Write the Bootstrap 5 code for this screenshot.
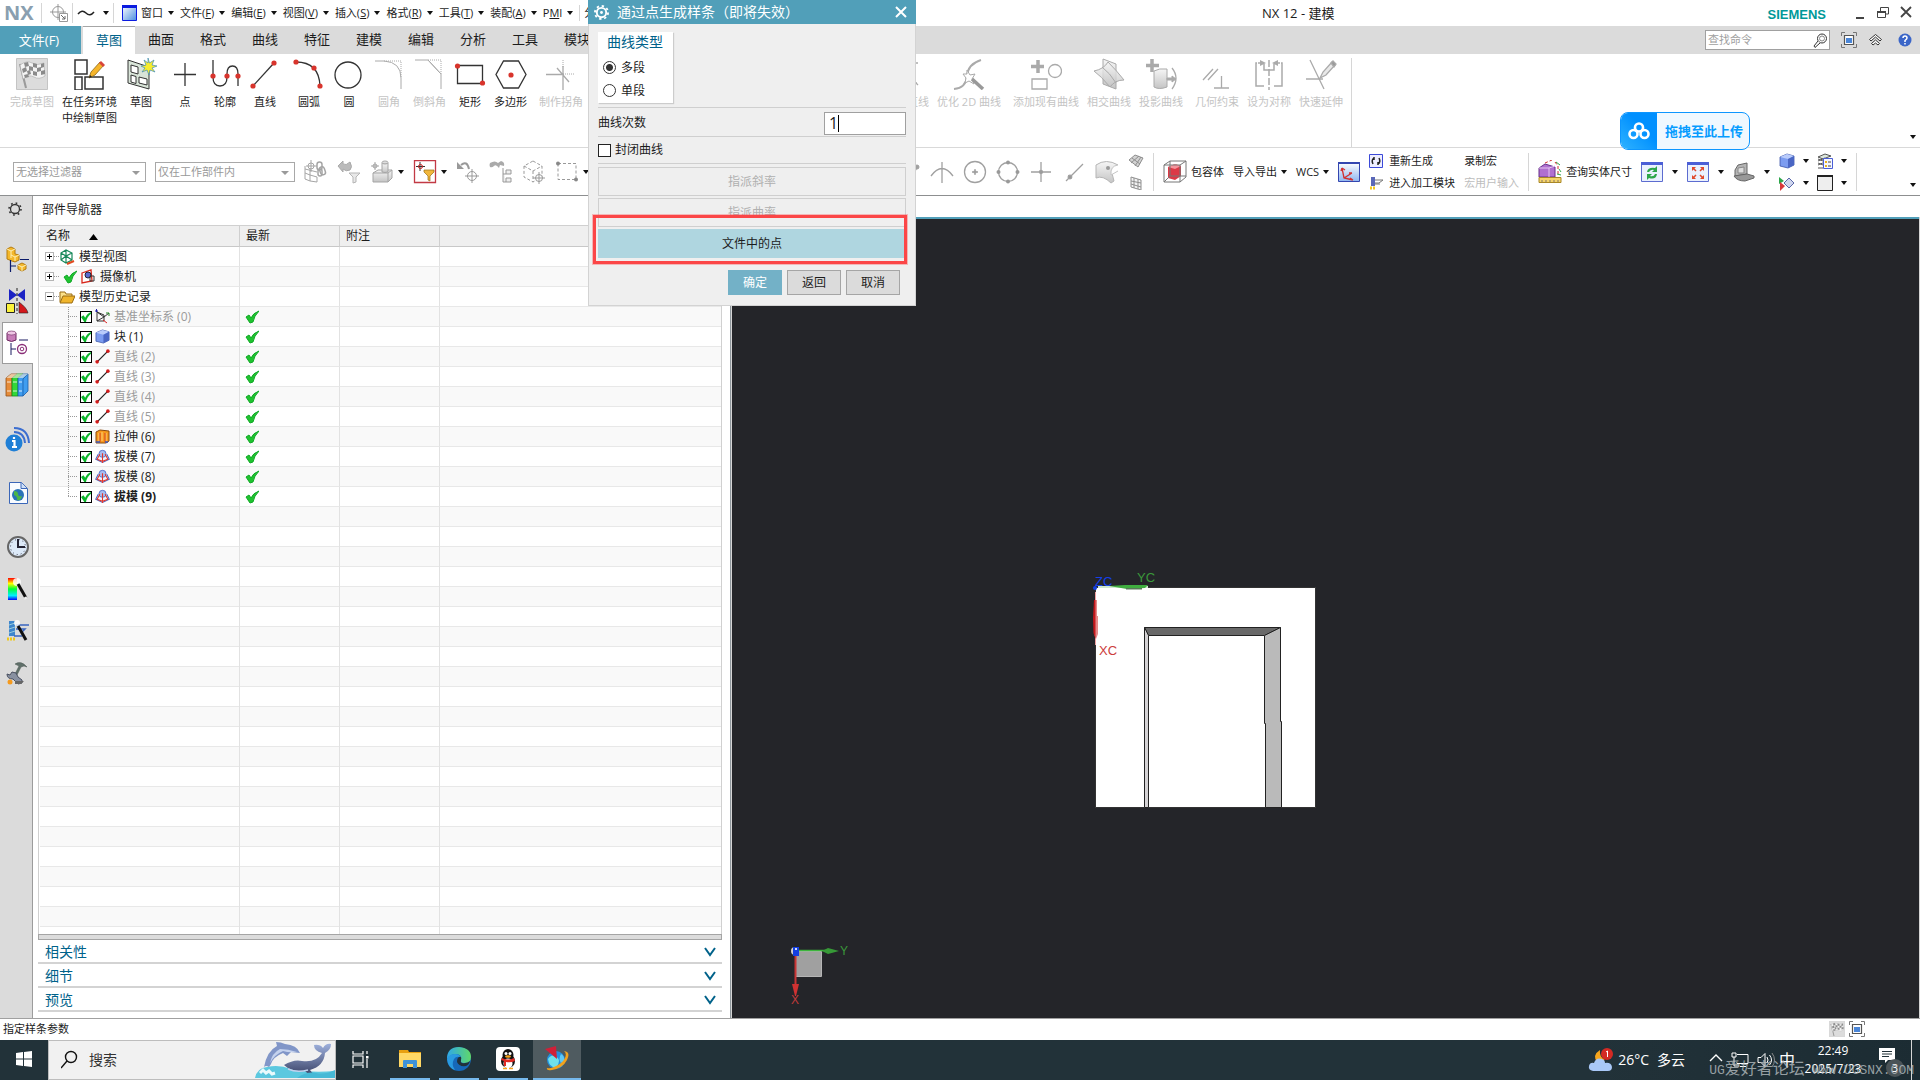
<!DOCTYPE html>
<html lang="zh-CN">
<head>
<meta charset="utf-8">
<meta name="viewport" content="width=device-width, initial-scale=1">
<title>NX 12 - 建模</title>
<link href="https://cdn.jsdelivr.net/npm/bootstrap@5.3.0/dist/css/bootstrap.min.css" rel="stylesheet">
<style>
:root{--nx-blue:#519fb9;--nx-deep:#00628a;--nx-grey:#dbdbdb}
body{font-family:"Open Sans","Noto Sans CJK SC",sans-serif;font-size:12px;line-height:16px;color:#1c1c1c;background:#fff;overflow:hidden}
button,input,select{font-family:inherit;font-size:inherit;line-height:inherit;color:inherit}
button{background:none;border:0;padding:0}
svg{display:block;flex:none}
a{color:inherit;text-decoration:none}
.tri{flex:none;width:0;height:0;border:3px solid transparent;border-top:4px solid #111;border-bottom:0}
.vsep{flex:none;width:1px;background:#d6d6d6}
.dim{color:#bdbdbd}
/* title bar */
.titlebar{height:26px;padding-left:4px}
.logo-nx{font-weight:700;font-size:20px;line-height:24px;color:#8a9fb0;width:37px}
.menu-btn{display:flex;align-items:center;gap:5px;font-size:11px;white-space:nowrap;padding-right:6px}
.win-title{left:1262px;top:4px;font-size:13px;line-height:18px}
.brand{font:700 13px/16px "Liberation Sans",sans-serif;color:#099}
/* tabs */
.tabbar{height:28px;background:var(--nx-grey);font-size:13px}
.tabbar .tab-file{width:81px;background:var(--nx-blue);color:#fff;margin-right:2px;padding-right:3px}
.tabbar .tab-i{width:52px;text-align:center;line-height:27px;white-space:nowrap}
.tabbar .on{background:#fff;border-top:1px solid #a6a6a6;color:var(--nx-deep)}
.find-box{width:125px;height:20px;border:1px solid #a0a0a0;background:#fff;padding-left:2px}
.find-box input{border:0;outline:0;width:97px;padding:0;font-size:11px;background:none}
.find-box input::placeholder{color:#a0a0a0}
/* ribbon */
.ribbon{height:94px;padding:4px 0 0 10px;border-bottom:1px solid #d9d9d9}
.ribbon .half-a{flex:0 0 875px}
.rb{min-width:32px;display:flex;flex-direction:column;align-items:center;font-size:11px;white-space:nowrap;gap:4px;text-align:center}
.rb.dim{color:#c4c4c4}
.tools{height:48px;border-bottom:1px solid #8d8f90;font-size:11px}
.tools .half-a{flex:0 0 897px;padding-left:13px}
.sel-f{height:20px;border:1px solid #a8a8a8;color:#999;background:#fff;appearance:none;padding:0 2px;font-size:11px;line-height:16px}
.sel-wrap{position:relative}
.sel-wrap .tri{position:absolute;right:6px;top:9px;border-width:4px 4px 0;border-top-color:#9a9a9a}
.sel-1{width:133px}.sel-2{width:140px}
.gap-s{gap:6px}.gap-m{gap:9px}.gap-l{gap:11px}
.stack-a{grid-template-columns:auto auto;gap:6px 9px}
.stack-b{grid-template-columns:16px auto 16px auto;gap:6px 8px}
.upload{left:1620px;top:112px;width:130px;height:38px;border:1px solid #0d96ff;border-radius:8px;background:#eff8ff;color:#069cff;font-weight:700;font-size:13px;overflow:hidden}
.upload .pan{width:36px;height:36px;background:linear-gradient(45deg,#2fb2ff,#0090ff 60%)}
/* resource rail */
.body-row{min-height:0}
.rail{width:33px;background:var(--nx-grey);border-right:1px solid #9c9c9c;padding-left:5px}
.rail button{height:42px;display:flex;align-items:center;width:27px}
.rail .r-gear{height:26px;margin-bottom:16px;padding-left:2px}
.rail .r-on{background:#fff;border:1px solid #9c9c9c;border-right:0;width:31px;margin-left:-3px;padding-left:2px;margin-right:-1px}
.rail .r-sp{margin-top:12px}
/* navigator */
.navi{width:698px;padding-left:5px;border-right:1px solid #8f979c}
.navi .inner{width:684px}
.navi h2{font-size:12px;line-height:16px;margin:0;padding:6px 0 7px 4px;font-weight:400;height:29px}
.tree-box{border:1px solid #d0d0d0;border-bottom:0;padding-left:1px}
.tree{table-layout:fixed;border-collapse:separate;border-spacing:0}
.tree th{height:21px;background:#efefef;font-weight:400;border-right:1px solid #cfcfcf;border-bottom:1px solid #c8c8c8;padding:0 0 0 6px}
.tree td{height:20px;border-right:1px solid #e2e2e2;border-bottom:1px solid #e8e8e8;padding:0 0 0 5px;line-height:16px}
.tree th:last-child,.tree td:last-child{border-right:0}
.tree tbody tr:nth-child(even){background:#f9f9f9}
.tree .c1{width:200px}.tree .c2{width:100px}
.cellf{display:flex;align-items:center;height:19px;white-space:nowrap}
.pm{width:9px;height:9px;border:1px solid #b5b5b5;background:#fff linear-gradient(#000,#000) center/5px 1px no-repeat}
.pm.plus{background:linear-gradient(#000,#000) center/5px 1px no-repeat,linear-gradient(#000,#000) center/1px 5px no-repeat,#fff}
.dots{width:5px;border-top:1px dotted #999}
.kid{padding-left:23px}
.branch{width:9px;height:19px;margin-right:3px;background:repeating-linear-gradient(#999 0 1px,transparent 1px 2px) left/1px 100% no-repeat,repeating-linear-gradient(90deg,#999 0 1px,transparent 1px 2px) center/100% 1px no-repeat}
.branch.end{background:repeating-linear-gradient(#999 0 1px,transparent 1px 2px) left top/1px 10px no-repeat,repeating-linear-gradient(90deg,#999 0 1px,transparent 1px 2px) center/100% 1px no-repeat}
.tick{appearance:none;margin:0 3px 0 0;width:12px;height:12px;border:1px solid #000;background:#fff url("data:image/svg+xml,%3Csvg xmlns='http://www.w3.org/2000/svg' viewBox='0 0 12 12'%3E%3Cpath d='M0 6l3-2 2 3q2-5 7-7v2q-5 4-6 10H4z' fill='%230cb52c'/%3E%3C/svg%3E") center/10px 10px no-repeat}
.off{color:#9b9b9b}
.tree-rest{background:linear-gradient(#e2e2e2,#e2e2e2) 199px 0/1px 100% no-repeat,linear-gradient(#e2e2e2,#e2e2e2) 299px 0/1px 100% no-repeat,linear-gradient(#e2e2e2,#e2e2e2) 399px 0/1px 100% no-repeat,repeating-linear-gradient(#f9f9f9 0 19px,#e8e8e8 19px 20px,#fff 20px 39px,#e8e8e8 39px 40px)}
.split{height:6px;background:#dcdcdc;border:1px solid #a5a5a5}
.fold{width:100%;height:24px;display:flex;align-items:center;justify-content:space-between;padding:2px 6px 0 7px;border-bottom:2px solid #d3d3d3;font-size:14px;color:var(--nx-deep)}
.fold:last-child{margin-bottom:6px}
/* graphics window */
.view-wrap{padding-top:21px;padding-right:1px;background:linear-gradient(#fff 0 21px,#d5d5d5 21px)}
.view{background:#242529;border-top:2px solid #519fb9;margin-left:1px}
.model{left:358px;top:351px}
.triad{left:48px;top:721px}
.status{height:22px;border-top:1px solid #a0a0a0;font-size:11px;padding:2px 55px 0 3px}
/* dialog */
.dlg{left:588px;top:0;width:328px;background:#efefef;border:1px solid #d3d3d3;border-top:0;z-index:5;padding-bottom:10px}
.dlg-head{height:24px;margin:0 -1px;background:var(--nx-blue);color:#fff;font-size:14px;padding:0 9px 0 6px}
.dlg-body{padding:8px 9px 0}
.kind{width:75px;height:71px;background:#fff;border:0;box-shadow:1px 1px 1px #ccc;margin:0 0 4px;padding:0 0 0 5px}
.kind legend{font-size:14px;line-height:20px;color:var(--nx-deep);margin:0;padding:0 0 0 4px;height:24px}
.kind label{height:23px;display:flex;align-items:center;gap:5px}
.kind input{appearance:none;width:13px;height:13px;border:1px solid #333;border-radius:50%;background:#fff;margin:0}
.kind input:checked{background:radial-gradient(#333 0 3px,#fff 4px)}
.line-row{border-top:1px solid #cfcfcf;display:flex;align-items:center}
.row-deg{height:29px;padding-top:2px}
.row-chk{height:27px}
.row-btns{padding-top:3px}
.row-act{gap:5px;padding:10px 6px 0 0}
.deg-in{width:82px;height:23px;border:1px solid #a0a0a0;background:#fff;font-size:16px;padding:0 4px;outline:0}
.deg-cur{position:absolute;left:14px;top:3px;width:1px;height:17px;background:#000}
.chk{appearance:none;width:13px;height:13px;border:1px solid #222;background:#fff;margin:0}
.wide-btn{width:100%;height:29px;border:1px solid #cfcfcf;display:block;color:#b0b0b0;margin-bottom:2px}
.wide-btn.hot{background:#afd6e0;border-color:#afd6e0;color:#1c1c1c}
.act{width:54px;height:25px;border:1px solid #a5a5a5;background:#dbdbdb}
.act.go{background:#73b1c7;border-color:#73b1c7;color:#fff}
.mark-box{left:4px;top:215px;width:314px;height:49px;border:3px solid #fb4647;box-shadow:0 0 0 1px #fb464755}
/* taskbar */
.task{height:40px;background:#223239;color:#fff;font-size:14px}
.task-r{background:linear-gradient(90deg,#22323900,#1c2c33)}
.t-search{width:288px;background:#f1f1f1;color:#333;border:1px solid #bdbdbd}
.t-search input{border:0;background:none;outline:0;width:150px;padding:0}
.t-search input::placeholder{color:#333}
.t-app{width:48px;display:flex;align-items:center;justify-content:center;border-bottom:2px solid transparent}
.t-list{gap:1px;margin-left:2px}
.t-run{background:linear-gradient(#76b9ed,#76b9ed) bottom/40px 2px no-repeat;background-origin:border-box}
.t-now{background:#4f5b60;border-bottom-color:#76b9ed}
.clock{font-size:12px;line-height:18px;width:60px;text-align:center}
.wm{right:6px;top:19px;font:13px/16px "Liberation Mono","Noto Sans CJK SC",monospace;color:#b4bcbf;white-space:nowrap;opacity:.8}
.wm b{font:16px/16px "Noto Sans CJK SC",sans-serif}
.n-badge{right:16px;top:19px;width:18px;height:18px;border-radius:50%;background:#4a5357;font-size:11px;text-align:center;line-height:18px}
</style>
</head>
<body class="vh-100 d-flex flex-column">

<svg width="0" height="0" class="position-absolute" aria-hidden="true">
 <defs>
  <linearGradient id="gB" x2="1" y2="1"><stop stop-color="#fff"/><stop offset="1" stop-color="#4a8ee0"/></linearGradient>
  <linearGradient id="gG" x2="0" y2="1"><stop stop-color="#f6f6f6"/><stop offset="1" stop-color="#c4c4c4"/></linearGradient>
  <linearGradient id="gR" x2="0" y2="1"><stop stop-color="#f00"/><stop offset=".25" stop-color="#ff0"/><stop offset=".5" stop-color="#0f3"/><stop offset=".8" stop-color="#0ef"/><stop offset="1" stop-color="#00f"/></linearGradient>
  <linearGradient id="gC" x2="0" y2="1"><stop stop-color="#fff"/><stop offset="1" stop-color="#8fb6f0"/></linearGradient>
  <linearGradient id="gE" x2="1" y2="0"><stop stop-color="#2fa8e8"/><stop offset="1" stop-color="#5fd86a"/></linearGradient>
  <linearGradient id="gW" x2="0" y2="1"><stop stop-color="#9db0dc"/><stop offset="1" stop-color="#3c4468"/></linearGradient>
  <symbol id="ok" viewBox="0 0 14 14"><path d="M1 7l3-2 2 3q2-5 8-7-5 5-6 11l-3 1z" fill="#1fc32f" stroke="#10a826" stroke-width="1"/></symbol>
  <symbol id="line" viewBox="0 0 14 14"><path d="M2 12L12 2" stroke="#222" stroke-width="1.200"/><circle cx="2" cy="12" r="1.700" fill="#d21a1a"/><circle cx="12" cy="2" r="1.700" fill="#d21a1a"/></symbol>
  <symbol id="draft" viewBox="0 0 14 14"><path d="M3 5L.7 9.500 7 12.500l6.300-3L11 5" fill="#eef2fc" stroke="#4a6ac8"/><circle cx="7" cy="4.500" r="3.300" fill="#a9bdf0" stroke="#4a6ac8" stroke-width=".8"/><path d="M7 4v9M4.500 5L2 9.500l5 2 5-2L9.500 5" stroke="#e2372b" fill="none"/></symbol>
  <symbol id="cube" viewBox="0 0 16 16"><path d="M1 4l7-3 7 2v9l-6 3-8-2z" fill="#7c9cf0" stroke="#3c55a8" stroke-width=".8"/><path d="M1 4l8 2 6-3-7-2z" fill="#b9cbfb"/><path d="M9 6v9l6-3V3z" fill="#4a66c4"/></symbol>
  <symbol id="flag" viewBox="0 0 32 32"><path d="M.5.5h31v31H.5z" fill="#dcdcdc" stroke="#c4c4c4"/><path d="M4 6l6 24" stroke="#9a9a9a" stroke-width="2"/><path d="M4 7q7-5 12-2t12 0l1 13q-6 4-11 1t-11 2z" fill="#f3f3f3" stroke="#aaa" stroke-width=".6"/><path d="M8 5l4-1 1 4-4 1zM17 5l4 1v4l-4-1zM25 6l3-1v4l-3 1zM13 8l4 1v4l-4-1zM21 10l4-1v4l-4 1zM6 11l4-2 1 4-4 2zM17 13l4 1v4l-4-1zM11 13l3-1 1 4-3 1zM25 13l4-1v4l-4 1zM8 17l4-1 1 3-4 1z" fill="#8b8b8b"/></symbol>
  <symbol id="chev" viewBox="0 0 12 10"><path d="M1 1l5 7 5-7" fill="none" stroke="#00628a" stroke-width="2"/></symbol>
  <symbol id="fit" viewBox="0 0 16 16"><path d="M.5 4V.5H4M12 .5h3.500V4M15.500 12v3.500H12M4 15.500H.5V12" fill="none" stroke="#777"/><path d="M3.500 3.500h9v9h-9z" fill="#fff" stroke="#555" stroke-width="1.200"/><path d="M5 6h6v5H5z" fill="#4a86d8"/></symbol>
 </defs>
</svg>

<header class="titlebar d-flex align-items-center position-relative">
 <div class="logo-nx">NX</div>
 <div class="vsep h-75"></div>
 <svg width="18" height="18" class="ms-2 me-1" viewBox="0 0 18 18" fill="none" stroke="#999"><circle cx="8" cy="8" r="5.500"/><path d="M8 0v16M0 8h16"/><path d="M9.500 9.500h8v8h-8z" fill="#fff"/><path d="M11 11l4 4m0-3v3h-3" stroke="#666"/></svg>
 <div class="vsep h-75"></div>
 <svg width="18" height="10" class="ms-1" viewBox="0 0 18 10"><path d="M1 6q4-5 8-1t8-1" fill="none" stroke="#222" stroke-width="1.500"/></svg>
 <span class="tri ms-2"></span>
 <div class="vsep h-75 ms-1 me-2"></div>
 <nav class="d-flex align-items-center">
  <svg width="15" height="16" class="me-1" viewBox="0 0 15 16"><path d="M.5.5h14v15H.5z" fill="url(#gB)" stroke="#0b1be0"/><path d="M0 0h15v3H0z" fill="#0b1be0"/></svg>
  <button class="menu-btn">窗口<i class="tri"></i></button>
  <button class="menu-btn"><span>文件(<u>F</u>)</span><i class="tri"></i></button>
  <button class="menu-btn"><span>编辑(<u>E</u>)</span><i class="tri"></i></button>
  <button class="menu-btn"><span>视图(<u>V</u>)</span><i class="tri"></i></button>
  <button class="menu-btn"><span>插入(<u>S</u>)</span><i class="tri"></i></button>
  <button class="menu-btn"><span>格式(<u>R</u>)</span><i class="tri"></i></button>
  <button class="menu-btn"><span>工具(<u>T</u>)</span><i class="tri"></i></button>
  <button class="menu-btn"><span>装配(<u>A</u>)</span><i class="tri"></i></button>
  <button class="menu-btn"><span>P<u>M</u>I</span><i class="tri"></i></button>
  <div class="vsep align-self-stretch me-1"></div>
  <button class="menu-btn">分析</button>
 </nav>
 <h1 class="win-title position-absolute m-0 fw-normal">NX 12 - 建模</h1>
 <div class="ms-auto d-flex align-items-center pe-2">
  <span class="brand pt-1">SIEMENS</span>
  <svg width="62" height="14" class="ms-4" viewBox="-4 0 62 14" fill="none" stroke="#444"><path d="M2 12h8" stroke-width="2" /><path d="M26.500 5V1.500h8V8H32"/><path d="M23.500 5.500h8v6h-8z"/><path d="M23 6h9" stroke-width="2"/><path d="M47 1l10 10M57 1L47 11" stroke-width="1.800"/></svg>
 </div>
</header>

<div class="tabbar d-flex">
 <button class="tab-file">文件(F)</button>
 <a href="#" class="tab-i on">草图</a><a href="#" class="tab-i">曲面</a><a href="#" class="tab-i">格式</a><a href="#" class="tab-i">曲线</a><a href="#" class="tab-i">特征</a><a href="#" class="tab-i">建模</a><a href="#" class="tab-i">编辑</a><a href="#" class="tab-i">分析</a><a href="#" class="tab-i">工具</a><a href="#" class="tab-i">模块</a>
 <div class="ms-auto d-flex align-items-center gap-l pe-2">
  <label class="find-box d-flex align-items-center gap-2"><input type="text" placeholder="查找命令" aria-label="查找命令">
   <svg width="15" height="15" viewBox="0 0 15 15" fill="none" stroke="#333"><circle cx="9" cy="5.500" r="4.500"/><circle cx="9" cy="5.500" r="2.500" stroke="#888"/><path d="M5 8l-4 5 1 1.500 5-4.500" fill="#fff"/></svg></label>
  <svg width="16" height="16"><use href="#fit"/></svg>
  <svg width="15" height="14" viewBox="0 0 15 14" fill="#fff" stroke="#333"><path d="M1.500 6.500l6-5 6 5-1.500 1.500-4.500-4-4.500 4z"/><path d="M3.500 10.500l4-3.500 4 3.500-1.500 1.500-2.500-2-2.500 2z"/></svg>
  <svg width="14" height="14" class="ms-1" viewBox="0 0 14 14"><circle cx="7" cy="7" r="6.500" fill="#3b66c8"/><path d="M5 5q0-2 2-2t2 2q0 1-2 2.500V9M7 10v1.500" fill="none" stroke="#fff" stroke-width="1.500"/></svg>
 </div>
</div>

<section class="ribbon d-flex position-relative">
 <div class="half-a d-flex gap-2 align-items-start overflow-hidden">
  <button class="rb dim"><svg width="32" height="32"><use href="#flag"/></svg>完成草图</button>
  <button class="rb"><svg width="32" height="32" viewBox="0 0 32 32" fill="#fff" stroke="#333" stroke-width="1.500"><path d="M1 2h12v14H1zM1 19h7v13H1zM11 19h18v12H11z"/><path d="M15 20l2-6L26 4l4 3-9 10z" fill="#f6b52a" stroke="#8a6a1a" stroke-width=".8"/><path d="M25 5l2-2 4 4-2 2z" fill="#d8453a" stroke="none"/><path d="M15 20l1-3 2 2z" fill="#222" stroke="none"/></svg>在任务环境<br>中绘制草图</button>
  <button class="rb"><svg width="32" height="32" viewBox="0 0 32 32" fill="#d8e4d8" stroke="#333"><path d="M3 2l21 7v22L3 25z"/><path d="M6 7l7 2v7l-7-2zM6 17l5 1.500v7L6 24zM14 19l8 2v6l-8-2z" fill="#fff"/><path d="M23 0l1.500 5L29 2l-2 5 5 1-5 2 3 4-5-2-1 5-2-5-5 2 3-4-4-2 5-1-2-5 4 3z" fill="#f7ec2e" stroke="#3f8db8" stroke-width=".7"/></svg>草图</button>
  <button class="rb ms-1"><svg width="32" height="32" viewBox="0 0 32 32"><path d="M16 5v23M5 16.500h22" stroke="#333" stroke-width="1.300"/></svg>点</button>
  <button class="rb"><svg width="32" height="32" viewBox="0 0 32 32" fill="none" stroke="#333" stroke-width="1.300"><path d="M4 2v17q0 9 7 9t7-9v-3q0-8 5.500-8t5.500 8v12"/><g fill="#d8342c" stroke="none"><circle cx="4" cy="18" r="2.600"/><circle cx="18" cy="18" r="2.600"/><circle cx="29" cy="18" r="2.600"/></g></svg>轮廓</button>
  <button class="rb"><svg width="32" height="32" viewBox="0 0 32 32"><path d="M4 28L25 5" stroke="#333" stroke-width="1.300"/><circle cx="4" cy="28" r="2.600" fill="#d8342c"/><circle cx="25" cy="5" r="2.600" fill="#d8342c"/></svg>直线</button>
  <button class="rb ms-1"><svg width="32" height="32" viewBox="0 0 32 32"><path d="M3 4q23 0 24 24" fill="none" stroke="#333" stroke-width="1.300"/><g fill="#d8342c"><circle cx="3" cy="4" r="2.600"/><circle cx="21" cy="10" r="2.600"/><circle cx="27" cy="28" r="2.600"/></g></svg>圆弧</button>
  <button class="rb"><svg width="32" height="32" viewBox="0 0 32 32"><circle cx="15" cy="17" r="13" fill="none" stroke="#333" stroke-width="1.300"/></svg>圆</button>
  <button class="rb dim"><svg width="32" height="32" viewBox="0 0 32 32" fill="none" stroke="#aaa"><path d="M2 3h9q17 1 17 17v11"/><path d="M11 3h17v17" stroke-dasharray="1 1"/></svg>圆角</button>
  <button class="rb dim"><svg width="32" height="32" viewBox="0 0 32 32" fill="none" stroke="#aaa"><path d="M1 2h13l13 14v15M14 2l13 14"/><path d="M14 2h13v14" stroke-dasharray="1 1"/></svg>倒斜角</button>
  <button class="rb"><svg width="32" height="32" viewBox="0 0 32 32"><path d="M3.500 7.500h25v18h-25z" fill="none" stroke="#333" stroke-width="1.300"/><circle cx="3.500" cy="8" r="2.600" fill="#d8342c"/><circle cx="28.500" cy="25" r="2.600" fill="#d8342c"/></svg>矩形</button>
  <button class="rb"><svg width="32" height="32" viewBox="0 0 32 32"><path d="M8.500 3h15l7.500 13.500L23.500 30h-15L1 16.500z" fill="none" stroke="#333" stroke-width="1.300"/><circle cx="16" cy="17" r="2.600" fill="#d8342c"/></svg>多边形</button>
  <button class="rb dim ms-1"><svg width="32" height="32" viewBox="0 0 32 32" fill="none" stroke="#aaa"><path d="M1 16.500h18M18 8v24M12 10l12 14" stroke-width="1.300"/><path d="M18 2v8M18 16h12" stroke-dasharray="1 1"/></svg>制作拐角</button>
 </div>
 <div class="d-flex gap-2 align-items-start">
  <button class="rb dim"><svg width="32" height="32" viewBox="0 0 32 32" fill="none" stroke="#aaa" stroke-width="1.300"><path d="M8 5h19M8 15l8 11 10-1M20 20l7 7"/></svg>派生直线</button>
  <button class="rb dim"><svg width="32" height="32" viewBox="0 0 32 32" fill="none" stroke="#aaa"><path d="M1 31q12-1 13-13T28 2" stroke-width="2"/><path d="M14 12l3 5 5-1-3 5 2 5-5-3-4 2 1-5-3-4h4z" fill="#fff"/><path d="M19 21l11 10" stroke-width="3.500" stroke="#999"/></svg>优化 2D 曲线</button>
  <button class="rb dim ms-1"><svg width="32" height="32" viewBox="0 0 32 32" fill="none" stroke="#aaa" stroke-width="1.300"><path d="M8 2v13M1 8.500h13" stroke-width="3.500"/><circle cx="25" cy="13" r="6.500"/><path d="M2 21h15v10H2z"/></svg>添加现有曲线</button>
  <button class="rb dim"><svg width="32" height="32" viewBox="0 0 32 32" fill="url(#gG)" stroke="#aaa"><path d="M10 1l13 5v25l-13-5z"/><path d="M1 13q10-2 14-9 9 9 16 18-9 0-14 7Q8 18 1 13z" fill-opacity=".8"/><path d="M9 9q8 6 14 16" fill="none"/></svg>相交曲线</button>
  <button class="rb dim"><svg width="32" height="32" viewBox="0 0 32 32" fill="url(#gG)" stroke="#aaa"><path d="M7 1v13M1 7.500h13" stroke-width="3.500"/><path d="M9 13q5-3 13-2v18q-8 3-13 0z"/><path d="M22 20h5v-2l4 3-4 3v-2h-5z" fill="#aaa"/><path d="M27 10q8 10 0 21" fill="none" stroke-width="1.300"/></svg>投影曲线</button>
  <button class="rb dim ms-1"><svg width="32" height="32" viewBox="0 0 32 32" fill="none" stroke="#aaa" stroke-width="1.300"><path d="M2 22l10-11M7 22l10-11M13 30h15M20.500 18v12"/></svg>几何约束</button>
  <button class="rb dim"><svg width="32" height="32" viewBox="0 0 32 32" fill="none" stroke="#aaa" stroke-width="1.500"><path d="M4 5h-1v23h8M28 5h1v23h-8" /><path d="M16 2v30" stroke-dasharray="7 2"/><path d="M5 5h2M27 5h-2M11 6v6h10V6"/><path d="M7 2l6 3-6 3zM25 2l-6 3 6 3z" fill="#aaa" stroke="none"/></svg>设为对称</button>
  <button class="rb dim"><svg width="32" height="32" viewBox="0 0 32 32" fill="none" stroke="#aaa" stroke-width="1.300"><path d="M5 2l14 29M1 21h17"/><path d="M15 20l3-6L27 4l3 3-9 10z" fill="#e8e8e8"/><path d="M26 5l2-2 3 3-2 3z" fill="#999"/></svg>快速延伸</button>
  <div class="vsep align-self-stretch"></div>
 </div>
 <i class="tri position-absolute end-0 bottom-0 me-1 mb-2"></i>
</section>

<section class="tools d-flex align-items-center">
 <div class="half-a d-flex align-items-center gap-m">
  <span class="sel-wrap"><select class="sel-f sel-1" aria-label="选择过滤器"><option>无选择过滤器</option></select><i class="tri"></i></span>
  <span class="sel-wrap"><select class="sel-f sel-2" aria-label="选择范围"><option>仅在工作部件内</option></select><i class="tri"></i></span>
  <svg width="24" height="24" viewBox="0 0 24 24" fill="none" stroke="#a5a5a5"><path d="M1 9l12 3M1 6v13l5 2V8M1 13l5 2 7 2M6 21l7 1v-5"/><circle cx="7" cy="6" r="3"/><path d="M7 0v12M2 6h11"/><g fill="none" stroke-width="1.500"><rect x="13" y="2" width="5" height="8" rx="2.500"/><rect x="16" y="7" width="5" height="8" rx="2.500" transform="rotate(-20 18 11)"/><rect x="14" y="9" width="4" height="7" rx="2"/></g></svg>
  <svg width="24" height="24" viewBox="0 0 24 24"><path d="M1 6l5-5v3q3 2 7-2 3 5 0 8-4 2-7-1v3z" fill="#bbb" stroke="#aaa"/><path d="M12 13h11l-4 4v5l-3 1v-6z" fill="#e8e8e8" stroke="#b5b5b5"/></svg>
  <span class="d-flex align-items-center gap-1"><svg width="24" height="24" viewBox="0 0 24 24" fill="url(#gG)" stroke="#a5a5a5"><path d="M3 13l5-3h14v8l-4 4H3z"/><path d="M3 13h15l4-3M18 13v9" fill="none"/><path d="M12 3v9q3 1 6 0V3z"/><ellipse cx="15" cy="2.500" rx="3" ry="1.500"/><circle cx="5" cy="6" r="2" fill="none"/><path d="M5 2v8M1 6h8"/></svg><i class="tri"></i></span>
  <span class="d-flex align-items-center gap-1"><svg width="24" height="24" viewBox="0 0 24 24"><path d="M1.500.5h21v22h-21z" fill="#fff" stroke="#c23a45" stroke-width="1.300"/><path d="M7 2v9M3 6.500h9" stroke="#333"/><circle cx="7.500" cy="6.500" r="2" fill="none" stroke="#c22"/><path d="M11 10h10v2l-4 4v5l-2-1v-4l-4-4z" fill="#f1b73c" stroke="#9a6d14" stroke-width=".7"/></svg><i class="tri"></i></span>
  <svg width="24" height="24" viewBox="0 0 24 24" fill="none" stroke="#999"><path d="M5 5q6-5 8 4" stroke-width="2"/><path d="M1 2v7h7z" fill="#999" stroke="none"/><circle cx="16" cy="16" r="4.500"/><path d="M16 9v14M9 16h14"/></svg>
  <svg width="24" height="24" viewBox="0 0 24 24" fill="#aaa" stroke="#999"><path d="M1 3q5-3 8 0l3-2q4 1 3 5l-4-1-1 3q-3-4-5-2t-4 1q-1-2 0-4z" stroke="none"/><path d="M14 8v14h3M14 14h3M17 10h5v4h-5zM17 18h5v4h-5z" fill="#eee"/></svg>
  <svg width="24" height="24" viewBox="0 0 24 24" fill="none" stroke="#999"><path d="M11 1l9 5v11l-9 5-9-5V6z M2 6l9 5 9-5M11 11v11" stroke-dasharray="3 2"/><circle cx="17" cy="18" r="3.500" fill="#fff"/><path d="M17 12v12M11 18h12"/></svg>
  <span class="d-flex align-items-center gap-1"><svg width="24" height="24" viewBox="0 0 24 24"><path d="M3 3.500h18v16H3z" fill="none" stroke="#999" stroke-dasharray="3 2"/><circle cx="3" cy="3.500" r="2" fill="#888"/><circle cx="21" cy="19.500" r="2" fill="#888"/></svg><i class="tri"></i></span>
 </div>
 <div class="d-flex align-items-center gap-m flex-shrink-0">
  <svg width="24" height="24" viewBox="0 0 24 24" fill="none" stroke="#a0a0a0"><path d="M2 20q12 2 18-13" stroke-width="1.300"/><circle cx="20" cy="7" r="2" fill="#a0a0a0"/></svg>
  <svg width="24" height="24" viewBox="0 0 24 24" fill="none" stroke="#a0a0a0" stroke-width="1.300"><path d="M1 16q11-15 22 0M12 2v21"/></svg>
  <svg width="24" height="24" viewBox="0 0 24 24" fill="none" stroke="#a0a0a0" stroke-width="1.300"><circle cx="12" cy="12" r="10.500"/><path d="M12 9v6M9 12h6"/><circle cx="12" cy="12" r="1"/></svg>
  <svg width="24" height="24" viewBox="0 0 24 24" fill="none" stroke="#a0a0a0" stroke-width="1.300"><circle cx="12" cy="12" r="9.500"/><g fill="#999" stroke="none"><circle cx="12" cy="2.500" r="2"/><circle cx="12" cy="21.500" r="2"/><circle cx="2.500" cy="12" r="2"/><circle cx="21.500" cy="12" r="2"/></g></svg>
  <svg width="24" height="24" viewBox="0 0 24 24" stroke="#a0a0a0" stroke-width="1.300"><path d="M12 2v20M2 12h20"/><circle cx="12" cy="12" r="1.500" fill="#999"/></svg>
  <svg width="24" height="24" viewBox="0 0 24 24" stroke="#a0a0a0" stroke-width="1.300"><path d="M4 21L21 4"/><circle cx="8" cy="17" r="1.800" fill="#999"/></svg>
  <svg width="24" height="24" viewBox="0 0 24 24"><path d="M1 5q10-7 22 0-9 2-4 16l-3 2Q8 15 1 18z" fill="url(#gG)" stroke="#b5b5b5"/><path d="M23 5q-8 1-7 10l7-4" fill="#fff" stroke="#c5c5c5"/><circle cx="13" cy="8" r="2" fill="#999"/></svg>
  <div class="d-flex flex-column gap-2">
   <svg width="16" height="14" viewBox="0 0 16 14" fill="#d2d2d2" stroke="#8f8f8f"><path d="M1 6l6-5 8 3-5 9zM4 4l8 6M3 9L11 2M7 12l6-9" /></svg>
   <svg width="16" height="14" viewBox="0 0 16 14" fill="#f3f3f3" stroke="#8f8f8f"><path d="M3 1l10 3v10L3 11zM6 2v10M10 3v10M3 5l10 2M3 8l10 3"/></svg>
  </div>
  <div class="vsep align-self-stretch"></div>
  <button class="d-flex align-items-center gap-1"><svg width="24" height="24" viewBox="0 0 24 24" fill="none" stroke="#777"><path d="M5 7l7-3 6 2v10l-6 4-7-2z" fill="#dc3a47" stroke="none"/><path d="M5 7l7-3 6 2-6 3z" fill="#f5949c" stroke="none"/><path d="M1 5h16v17H1zM1 5l6-4h16v16l-6 5M17 5l6-4M7 1v15h16M7 16l-6 6"/></svg>包容体</button>
  <button class="d-flex align-items-center gap-1">导入导出<i class="tri"></i></button>
  <button class="d-flex align-items-center gap-1">WCS<i class="tri"></i></button>
  <svg width="22" height="20" viewBox="0 0 22 20"><path d="M.5.5h21v19H.5z" fill="url(#gC)" stroke="#3446b0"/><path d="M0 0h22v2H0z" fill="#3446b0"/><path d="M4 6l2 10 9 2M6 16l8-5M4 6l-1 3M4 6l3 2M14 11h-3M15 18l-3-2" fill="none" stroke="#d23030" stroke-width="1.300"/></svg>
  <div class="d-grid text-start stack-a">
   <button class="d-flex align-items-center gap-s"><svg width="14" height="14" viewBox="0 0 14 14"><path d="M.5.5h13v13H.5z" fill="#eef" stroke="#3b49d8"/><path d="M4 10q-2-4 1-6M10 4q2 4-1 6M5 3v3M9 11V8" stroke="#222" stroke-width="1.500" fill="none"/></svg>重新生成</button><button class="text-start">录制宏</button>
   <button class="d-flex align-items-center gap-s"><svg width="14" height="14" viewBox="0 0 14 14"><path d="M2 1h4v9H2z" fill="#5a68b8"/><path d="M6 4h8l-4 3h-4M6 8h5" stroke="#777" fill="none"/><path d="M1 12h6" stroke="#f3c81e" stroke-width="3" stroke-dasharray="2 1"/></svg>进入加工模块</button><button class="dim text-start">宏用户输入</button>
  </div>
  <div class="vsep align-self-stretch"></div>
  <button class="d-flex align-items-center gap-1"><svg width="24" height="24" viewBox="0 0 24 24"><path d="M1 8l6-4 10 3v10H1z" fill="#b070d0" stroke="#66308a"/><path d="M1 8h10l6-2M11 8v10" fill="none" stroke="#e4c4f0"/><path d="M1 17.500h22v5H1z" fill="#f5d46a" stroke="#a98726"/><path d="M4 20v2M8 20v2M12 20v2M16 20v2M20 20v2" stroke="#876"/><path d="M7 3l7-3M17 2l3 4v10" fill="none" stroke="#d23030" stroke-dasharray="3 2"/><path d="M18 2l4 3M21 9l2 3M19 14l4 1" stroke="#2da64a"/></svg>查询实体尺寸</button>
  <span class="d-flex align-items-center gap-m"><svg width="22" height="20" viewBox="0 0 22 20"><path d="M.5.5h21v19H.5z" fill="#eaf1fe" stroke="#5c6cd0"/><path d="M0 0h22v3H0z" fill="#4b5fd6"/><path d="M6 10q1-5 8-4l2-2v6h-5l2-2q-3-1-5 2zM16 12q-1 6-8 4l-2 2v-6h5l-2 2q4 1 5-2z" fill="#2da64a"/></svg><i class="tri"></i></span>
  <span class="d-flex align-items-center gap-m"><svg width="22" height="20" viewBox="0 0 22 20"><path d="M.5.5h21v19H.5z" fill="#eaf1fe" stroke="#5c6cd0"/><path d="M0 0h22v3H0z" fill="#4b5fd6"/><path d="M5 5h4L5 9zM17 5v4l-4-4zM5 17v-4l4 4zM17 17h-4l4-4z" fill="#e04a2c"/><path d="M6 6l3 3M16 6l-3 3M6 16l3-3M16 16l-3-3" stroke="#e04a2c" stroke-width="1.500"/></svg><i class="tri"></i></span>
  <span class="d-flex align-items-center gap-m"><svg width="22" height="20" viewBox="0 0 22 20" fill="#b5b5b5" stroke="#666"><path d="M2 14V8l3-5 9-2v11z"/><path d="M1 14l13-2 7 2v2l-9 3q-8 0-11-5z" fill="#999"/><path d="M5 11V6l6-1v6z" fill="#ddd" stroke="#888"/></svg><i class="tri"></i></span>
  <div class="d-grid align-items-center stack-b">
   <svg width="16" height="16"><use href="#cube"/></svg><i class="tri"></i>
   <svg width="16" height="16" viewBox="0 0 16 16"><path d="M1 4l7-3 6 2-8 3zM1 8l7-3M1 12l7-3M1 15h5M1 6l5 2M1 10l5 2" fill="#dde7dd" stroke="#555"/><path d="M6.500 5.500h9v10h-9z" fill="#f5f7ff" stroke="#4b5fd6"/><path d="M8 8h2v2H8zM8 12h2v2H8z" fill="#e8b21e"/><path d="M11 9h3M11 13h3" stroke="#444"/></svg><i class="tri"></i>
   <svg width="16" height="16" viewBox="0 0 16 16"><path d="M0 2l5 4-5 3z" fill="#2da64a"/><path d="M1 7l5 4-5 5z" fill="#d8383c"/><path d="M5 8l5-5 5 5-5 5z" fill="#cfd6ee" stroke="#5867a8"/></svg><i class="tri"></i>
   <svg width="16" height="16" viewBox="0 0 16 16"><path d="M.5.5h15v15H.5z" fill="#eee" stroke="#222"/><path d="M0 1h16" stroke="#222" stroke-width="2"/></svg><i class="tri"></i>
  </div>
  <div class="vsep align-self-stretch"></div>
 </div>
 <i class="tri ms-auto align-self-end me-1 mb-2"></i>
</section>

<main class="body-row flex-grow-1 d-flex">
 <nav class="rail d-flex flex-column">
  <button class="r-gear" aria-label="设置"><svg width="16" height="16" viewBox="0 0 16 16" fill="none" stroke="#333"><circle cx="8" cy="8" r="4.500" stroke-width="1.300"/><circle cx="8" cy="8" r="6" stroke-width="1.600" stroke-dasharray="1.700 3"/></svg></button>
  <button aria-label="装配导航器"><svg width="24" height="26" viewBox="0 0 24 26"><path d="M2 3l4-2 4 2v5l4 1v5l-4 2-3-1-5-2z" fill="#f4b82b" stroke="#b57c10"/><path d="M2 3l4 2 4-2M6 5v7M6 9l4 2 4-2M10 11v4" stroke="#fff0b5" fill="none"/><path d="M15 13.500h9M5.500 14v12M6 20h5" stroke="#0a1a6a" stroke-width="1.200"/><path d="M13 19l4-2 4 2v4l-4 2-4-2z" fill="#f4b82b" stroke="#b57c10"/><path d="M13 19l4 2 4-2M17 21v4" stroke="#fff0b5" fill="none"/></svg></button>
  <button aria-label="约束导航器"><svg width="24" height="26" viewBox="0 0 24 26"><path d="M4 1l8 6-8 6zM20 1l-8 6 8 6z" fill="#1b22c4"/><path d="M12 0v26" stroke="#222" stroke-dasharray="3 2"/><path d="M1.500 15.500h8v9h-8z" fill="#fbf23a" stroke="#222"/><path d="M14 14v11h9q-1-5-9-11z" fill="#d4181c" stroke="#222" stroke-width=".6"/></svg></button>
  <button class="r-on" aria-label="部件导航器"><svg width="24" height="26" viewBox="0 0 24 26"><path d="M2 3v7q4.500 3 9 0V3q-4.500-3-9 0z" fill="#c77db8" stroke="#6f2a62"/><ellipse cx="6.500" cy="3" rx="4.500" ry="2" fill="#eec6e4" stroke="#6f2a62" stroke-width=".6"/><path d="M14 10h9M6 13v12M6 19h5" stroke="#1a1a60"/><circle cx="17" cy="19" r="4.500" fill="#fff" stroke="#8a2f78" stroke-width="1.300"/><circle cx="17" cy="19" r="1.800" fill="none" stroke="#8a2f78"/></svg></button>
  <button aria-label="重用库"><svg width="24" height="24" viewBox="0 0 24 24" stroke-width=".8"><path d="M1 5l5-4h6L7 5v18H1z" fill="#e58c3a" stroke="#95511a"/><path d="M7 5l5-4h6l-5 4v18H7z" fill="#32d838" stroke="#128a1a"/><path d="M13 5l5-4h5v17l-5 5h-5z" fill="#3f9df0" stroke="#1b5da8"/><path d="M18 6v17M18 6l5-5" stroke="#1b5da8"/><path d="M1 5l5-4h17l-5 4z" fill="#f4efe2" fill-opacity=".6"/><path d="M2 9h4M2 18h4M8 9h4M8 18h4M14 9h3M14 18h3" stroke="#fff"/></svg></button>
  <button class="r-sp" aria-label="信息"><svg width="25" height="26" viewBox="0 0 25 26"><circle cx="9" cy="17" r="8.500" fill="#1f7fd6"/><path d="M9 11v2M7 15h2.500v6M7 21h5" stroke="#fff" stroke-width="2.200" fill="none"/><path d="M9 6q10 0 11 11M9 2q14 0 15 15" fill="none" stroke="#3b6ed0" stroke-width="2"/></svg></button>
  <button class="r-sp" aria-label="浏览器"><svg width="24" height="24" viewBox="0 0 24 24"><path d="M4.500 1.500h12l6 6v15h-18z" fill="#f8fbff" stroke="#3a66b8"/><path d="M16 1.500v6h6" fill="#cfe0f8" stroke="#3a66b8"/><circle cx="13" cy="14" r="6" fill="#2a73b8"/><path d="M9 10q4 0 4 3t4 2q-1 5-5 4 1-3-3-5z" fill="#4cb648"/></svg></button>
  <button class="r-sp" aria-label="历史记录"><svg width="24" height="24" viewBox="0 0 24 24"><circle cx="13" cy="12" r="10" fill="#dce9f8" stroke="#666" stroke-width="2"/><circle cx="13" cy="12" r="7.500" fill="none" stroke="#445" stroke-dasharray="1 3"/><path d="M13 4v8h7" fill="none" stroke="#223" stroke-width="2"/></svg></button>
  <button aria-label="颜色"><svg width="24" height="24" viewBox="0 0 24 24"><path d="M3 1h9v22H3z" fill="url(#gR)"/><circle cx="12" cy="5" r="4" fill="#fff" opacity=".8"/><path d="M13 7l8 14" stroke="#111" stroke-width="3"/><path d="M20 20l1 2" stroke="#eee" stroke-width="3"/></svg></button>
  <button aria-label="加工向导"><svg width="24" height="24" viewBox="0 0 24 24"><path d="M4 2h6v15H4z" fill="#3f86cc"/><path d="M4 6l6-2M4 10l6-2M4 14l6-2" stroke="#9cd"/><path d="M11 6h13M11 10h9l-3 3M9 17h8" stroke="#3a66c0" fill="none" stroke-width="1.500"/><path d="M2 20h9" stroke="#f0c818" stroke-width="3" stroke-dasharray="2 1"/><circle cx="12" cy="4" r="3" fill="#fff" opacity=".8"/><path d="M13 7l8 14" stroke="#111" stroke-width="3"/></svg></button>
  <button aria-label="工具"><svg width="24" height="24" viewBox="0 0 24 24"><path d="M10 3q6-4 12 3l-3-1-3 1-4 8-2-1 4-8z" fill="#60706a" stroke="#4a5650" stroke-width=".5"/><path d="M2 13l3 1 2-3 4 1 2 4 4 3v3l-4 1-5-5q-6 0-6-5z" fill="#8890a0" stroke="#4a5060"/><path d="M10 20h9l-3 3h-6z" fill="#666"/><circle cx="5" cy="21" r="2.500" fill="#f59a1e"/></svg></button>
 </nav>

 <section class="navi d-flex flex-column">
  <div class="inner d-flex flex-column flex-grow-1">
   <h2>部件导航器</h2>
   <div class="tree-box flex-grow-1 d-flex flex-column">
    <table class="tree w-100">
     <colgroup><col class="c1"><col class="c2"><col class="c2"><col></colgroup>
     <thead><tr><th>名称 <svg class="d-inline ms-3" width="9" height="6" viewBox="0 0 9 6"><path d="M0 6l4.500-6L9 6z"/></svg></th><th>最新</th><th>附注</th><th></th></tr></thead>
     <tbody>
      <tr><td><div class="cellf"><i class="pm plus"></i><i class="dots"></i><svg width="16" height="16" viewBox="0 0 16 16" fill="none" stroke="#16885a" stroke-width="1.200"><path d="M2 4l5-3 6 3v7l-6 3-5-3zM2 4l5 3 6-3M7 7v7M2 11l5-4 6 4M7 1v6"/><path d="M8 15l7-3" stroke="#e04a20" stroke-width="2"/></svg><span class="ms-1">模型视图</span></div></td><td></td><td></td><td></td></tr>
      <tr><td><div class="cellf"><i class="pm plus"></i><i class="dots"></i><svg class="mx-1" width="14" height="14"><use href="#ok"/></svg><svg width="15" height="15" viewBox="0 0 15 15"><path d="M1 4l9-3 1 11-10 2z" fill="#fff" stroke="#d8281c" stroke-width="1.300"/><circle cx="7" cy="6" r="3" fill="#5a6ad0" stroke="#223"/><path d="M9 7h4v5H9z" fill="none" stroke="#333"/></svg><span class="ms-1">摄像机</span></div></td><td></td><td></td><td></td></tr>
      <tr><td><div class="cellf"><i class="pm"></i><i class="dots"></i><svg width="16" height="14" viewBox="0 0 16 14"><path d="M1 12V2h5l1 2h6v3" fill="#fbe08a" stroke="#9a6d14"/><path d="M1 13L4 6h12l-3 7z" fill="#f0b52c" stroke="#9a6d14"/></svg><span class="ms-1">模型历史记录</span></div></td><td></td><td></td><td></td></tr>
      <tr><td><div class="cellf kid off"><i class="branch"></i><input class="tick" type="checkbox" checked aria-label="基准坐标系 (0)"><svg width="15" height="15" viewBox="0 0 15 15" fill="none" stroke="#333"><path d="M2 3v9l7-4zM2 3l7 3v6l-7 0M9 8l5-4" /><path d="M0 2h3M1.500 0v3" stroke="#22a"/><path d="M8 11l4 3" stroke="#d22"/><path d="M11 4h3v3" stroke="#282"/></svg><span class="ms-1">基准坐标系 (0)</span></div></td><td><svg width="14" height="14"><use href="#ok"/></svg></td><td></td><td></td></tr>
      <tr><td><div class="cellf kid"><i class="branch"></i><input class="tick" type="checkbox" checked aria-label="块 (1)"><svg width="15" height="15"><use href="#cube"/></svg><span class="ms-1">块 (1)</span></div></td><td><svg width="14" height="14"><use href="#ok"/></svg></td><td></td><td></td></tr>
      <tr><td><div class="cellf kid off"><i class="branch"></i><input class="tick" type="checkbox" checked aria-label="直线 (2)"><svg width="15" height="15"><use href="#line"/></svg><span class="ms-1">直线 (2)</span></div></td><td><svg width="14" height="14"><use href="#ok"/></svg></td><td></td><td></td></tr>
      <tr><td><div class="cellf kid off"><i class="branch"></i><input class="tick" type="checkbox" checked aria-label="直线 (3)"><svg width="15" height="15"><use href="#line"/></svg><span class="ms-1">直线 (3)</span></div></td><td><svg width="14" height="14"><use href="#ok"/></svg></td><td></td><td></td></tr>
      <tr><td><div class="cellf kid off"><i class="branch"></i><input class="tick" type="checkbox" checked aria-label="直线 (4)"><svg width="15" height="15"><use href="#line"/></svg><span class="ms-1">直线 (4)</span></div></td><td><svg width="14" height="14"><use href="#ok"/></svg></td><td></td><td></td></tr>
      <tr><td><div class="cellf kid off"><i class="branch"></i><input class="tick" type="checkbox" checked aria-label="直线 (5)"><svg width="15" height="15"><use href="#line"/></svg><span class="ms-1">直线 (5)</span></div></td><td><svg width="14" height="14"><use href="#ok"/></svg></td><td></td><td></td></tr>
      <tr><td><div class="cellf kid"><i class="branch"></i><input class="tick" type="checkbox" checked aria-label="拉伸 (6)"><svg width="15" height="15" viewBox="0 0 15 15"><path d="M1 3l4-2 9 1v10l-3 2H1z" fill="#f79a1c" stroke="#8a4a10"/><path d="M4 4v9M7 3v9M11 4v9" stroke="#fbd07a"/><path d="M5 4v9M10 4v9" stroke="#d4401c"/><path d="M1 13h4M10 13h3" stroke="#3a55c0" stroke-width="1.500"/></svg><span class="ms-1">拉伸 (6)</span></div></td><td><svg width="14" height="14"><use href="#ok"/></svg></td><td></td><td></td></tr>
      <tr><td><div class="cellf kid"><i class="branch"></i><input class="tick" type="checkbox" checked aria-label="拔模 (7)"><svg width="15" height="15"><use href="#draft"/></svg><span class="ms-1">拔模 (7)</span></div></td><td><svg width="14" height="14"><use href="#ok"/></svg></td><td></td><td></td></tr>
      <tr><td><div class="cellf kid"><i class="branch"></i><input class="tick" type="checkbox" checked aria-label="拔模 (8)"><svg width="15" height="15"><use href="#draft"/></svg><span class="ms-1">拔模 (8)</span></div></td><td><svg width="14" height="14"><use href="#ok"/></svg></td><td></td><td></td></tr>
      <tr><td><div class="cellf kid"><i class="branch end"></i><input class="tick" type="checkbox" checked aria-label="拔模 (9)"><svg width="15" height="15"><use href="#draft"/></svg><span class="ms-1 fw-bold">拔模 (9)</span></div></td><td><svg width="14" height="14"><use href="#ok"/></svg></td><td></td><td></td></tr>
     </tbody>
    </table>
    <div class="tree-rest flex-grow-1"></div>
   </div>
   <div class="split"></div>
   <button class="fold">相关性<svg width="12" height="10"><use href="#chev"/></svg></button>
   <button class="fold">细节<svg width="12" height="10"><use href="#chev"/></svg></button>
   <button class="fold">预览<svg width="12" height="10"><use href="#chev"/></svg></button>
  </div>
 </section>

 <section class="view-wrap flex-grow-1 d-flex">
  <div class="view flex-grow-1 position-relative overflow-hidden">
   <svg class="model position-absolute" width="240" height="245" viewBox="1090 570 240 245" font-family="Liberation Sans, sans-serif" font-size="13">
    <path d="M1095.500 587.500h220v220h-220z" fill="#fff" stroke="#333"/>
    <path d="M1144.500 627.500h136l-16 8h-116z" fill="#686868" stroke="#222"/>
    <path d="M1144.500 627.500l4 8v172h-4z" fill="#d4d2d4" stroke="#222"/>
    <path d="M1280.500 627.500v94h1v86h-16v-84h-1v-88z" fill="#bababa" stroke="#222"/>
    <path d="M1098 587h50" stroke="#cfe8cf" stroke-width="2"/><path d="M1109 586l16-1h23l-3 3-18 1z" fill="#3fae3f"/><path d="M1126 588h16v1.500h-16z" fill="#587a58"/>
    <path d="M1095.500 592v53" stroke="#f0a0a0"/><path d="M1094 600h3v16h1v18l-2 5-2-5z" fill="#e58a8a"/><path d="M1093 618l1-18h1.500v39l-2-6z" fill="#c4181c"/>
    <circle cx="1095" cy="588" r="2" fill="#1440e0"/>
    <text x="1095" y="586" fill="#1540e8">ZC</text><text x="1137" y="582" fill="#3a983a">YC</text><text x="1099" y="655" fill="#cc3c3c">XC</text>
   </svg>
   <svg class="triad position-absolute" width="80" height="72" viewBox="780 940 80 72" font-family="Liberation Sans, sans-serif" font-size="12">
    <path d="M795.500 951.500h26v25h-26z" fill="#a0a0a0" stroke="#b5b5b5"/>
    <path d="M799 950.500h30" stroke="#3db53d" stroke-width="1.500"/><path d="M822 951l6-3 11 3-11 3z" fill="#379a37"/>
    <path d="M795.500 955v30" stroke="#c83434" stroke-width="2"/><path d="M792 984h7l-2 8-1 4h-1l-1-4z" fill="#cf3232"/>
    <circle cx="795" cy="951" r="4" fill="#d0d0d0"/><path d="M793 947h6v9h-6z" fill="#1440e0"/><path d="M795 948h2v2h-2z" fill="#cfd8ff"/>
    <text x="840" y="955" fill="#3a983a">Y</text><text x="791" y="1004" fill="#c03a3a">X</text>
   </svg>
  </div>
 </section>
</main>

<div class="status d-flex justify-content-between"><span>指定样条参数</span><span class="d-flex gap-1"><svg width="16" height="16"><use href="#flag"/></svg><svg width="16" height="16"><use href="#fit"/></svg></span></div>

<footer class="task d-flex position-relative">
 <button class="t-app" aria-label="开始"><svg width="16" height="16" viewBox="0 0 16 16" fill="#fff"><path d="M0 2l7-1v6.500H0zM8 1l8-1v7.500H8zM0 8.500h7V15l-7-1zM8 8.500h8V16l-8-1z"/></svg></button>
 <label class="t-search d-flex align-items-center ps-2">
  <svg width="20" height="20" class="me-2 ms-1" viewBox="0 0 20 20" fill="none" stroke="#111" stroke-width="1.400"><circle cx="10" cy="7" r="5.500"/><path d="M6 11l-6 7"/></svg>
  <input type="text" placeholder="搜索" aria-label="搜索">
  <svg width="80" height="36" class="ms-auto" viewBox="0 0 80 36"><path d="M0 36q2-10 12-11 12-3 24 2 18 4 44 2v7z" fill="#5cc8df"/><path d="M5 31l3-3 3 3 3-2 3 3 3-1" stroke="#e8fafc" stroke-width="3" fill="none"/><path d="M9 25Q12 9 22 4l-1-4q5 0 9 2 12 1 15 9l-9-1-4 4-4-3q-10 4-12 11l-2 3q-3-2-5 0z" fill="#8196c8"/><path d="M25 7q8 0 17 3-8 1-14-1-9 4-13 12 2-10 10-14z" fill="#c4d2ee"/><path d="M29 23q10-6 18-4 14 2 20-8-8-2-8-8 6-1 9 3 3-5 8-4 0 6-6 9-1 13-15 17l4 5q-6-1-9-4-14 1-21-6z" fill="url(#gW)"/><path d="M33 27q9 4 20 1" stroke="#c4d2ee" stroke-width="1.500" fill="none"/><path d="M42 36q10-7 19-5t19-3v8z" fill="#46b9d6"/></svg>
 </label>
 <button class="t-app" aria-label="任务视图"><svg width="17" height="17" viewBox="0 0 17 17" fill="none" stroke="#fff" stroke-width="1.200"><path d="M1 0v3h10V0M1 17v-3h10v3M1 5h10v7H1zM15 0v3M15 8v9"/><path d="M14 5h2.500v2.500H14z" fill="#fff" stroke="none"/></svg></button>
 <div class="d-flex t-list">
 <button class="t-app t-run" aria-label="文件资源管理器"><svg width="24" height="20" viewBox="0 0 24 20"><path d="M1 1h9l1 2h12v5H1z" fill="#e8a010"/><path d="M1 4h22v14H1z" fill="#ffd865"/><path d="M5 19v-7q0-1 1-1h12q1 0 1 1v7h-4v-4H9v4z" fill="#3f93d8"/></svg></button>
 <button class="t-app t-run" aria-label="Edge"><svg width="24" height="24" viewBox="0 0 24 24"><circle cx="12" cy="12" r="12" fill="#1668b8"/><path d="M0 12Q0 0 12 0q12 1 12 10 0 6-7 6-4 0-3-3 1-6-5-6-6 0-9 5z" fill="url(#gE)"/><path d="M0 12q2-5 8-5 5 0 6 4-4-3-7 1-3 6 1 11Q1 21 0 12z" fill="#2a9be0"/><path d="M12 10q3-1 2 3-1 4 4 3 3 0 5-2-1 4-4 5-7 1-9-4 0-4 2-5z" fill="#223239"/></svg></button>
 <button class="t-app t-run" aria-label="QQ"><svg width="24" height="24" viewBox="0 0 24 24"><rect width="24" height="24" rx="4" fill="#fff"/><ellipse cx="12" cy="14" rx="7" ry="7" fill="#111"/><ellipse cx="12" cy="8" rx="5.500" ry="6" fill="#111"/><ellipse cx="12" cy="16.500" rx="4.500" ry="5" fill="#fff"/><path d="M6 11q6 3 12 0l1 3q-4 2-9 1v4H8v-5l-3-1z" fill="#e02a24"/><circle cx="10" cy="6.500" r="1.500" fill="#fff"/><circle cx="14" cy="6.500" r="1.500" fill="#fff"/><ellipse cx="12" cy="9.500" rx="3" ry="1.200" fill="#f7a51c"/><path d="M7 21.500h4M13 21.500h4" stroke="#f7a51c" stroke-width="1.500"/></svg></button>
 <button class="t-app t-now" aria-label="NX"><svg width="26" height="26" viewBox="0 0 26 26"><circle cx="12" cy="14" r="9" fill="#2390e0"/><path d="M4 13q3-5 7-3t4 5-3 7q-7-1-8-9z" fill="#6fe0ea"/><path d="M17 8q4 2 3 7l-3 2q-3-4 0-9z" fill="#5fc8f4"/><path d="M20 5q7 1 3 9T8 24q-6 1-5-2 3 1 7-1 8-3 11-9 2-5-1-7z" fill="#f2a21c"/><path d="M1 3l11-3 1 13z" fill="#d02038"/></svg></button>
 </div>
 <div class="task-r ms-auto d-flex align-items-center">
  <svg width="26" height="26" class="me-1" viewBox="0 0 26 26"><path d="M12 3q-1 7 5 10l-8 2Q4 8 12 3z" fill="#f7a51c"/><path d="M5 24q-5-1-4-5 1-4 5-3 2-6 8-4 3 1 3 4 6-1 7 4 0 4-4 4z" fill="#a9c8f7"/><circle cx="19" cy="7" r="6" fill="#d42a24"/><path d="M18 5l1.500-1v6" stroke="#fff" fill="none"/></svg>
  <span>26°C</span><span class="ms-2 me-4">多云</span>
  <svg width="14" height="16" class="me-2" viewBox="0 0 14 16" fill="none" stroke="#fff" stroke-width="1.400"><path d="M1 9l6-6 6 6"/></svg>
  <svg width="18" height="16" class="me-2" viewBox="0 0 18 16" fill="none" stroke="#fff"><path d="M6 2.500h11v9H6M9 14.500h6M1 1h4v4H1zM3 5v9h5"/></svg>
  <svg width="18" height="16" viewBox="0 0 18 16" fill="none" stroke="#fff"><path d="M1 5.500h3l4-4v13l-4-4H1z"/><path d="M10 5q2 3 0 6M12.500 3q4 5 0 10" /><path d="M15 1q5 7 0 14" stroke="#888"/></svg>
  <span class="ms-1 fs-6">中</span>
  <div class="clock ms-2">22:49<br>2025/7/23</div>
  <svg width="16" height="16" viewBox="0 0 16 16" class="ms-3 mb-2"><path d="M0 0h16v12H9l-3 3v-3H0z" fill="#fff"/><path d="M3 3.500h10M3 6h10M3 8.500h7" stroke="#223239"/></svg>
  <div class="vsep align-self-stretch ms-3 me-2"></div>
 </div>
 <span class="n-badge position-absolute">3</span>
 <div class="wm position-absolute">UG<b>爱好者论坛</b> WWW.UGSNX.COM</div>
</footer>

<div class="upload position-absolute d-flex align-items-center">
 <div class="pan d-flex align-items-center justify-content-center"><svg width="22" height="18" viewBox="0 0 22 18" fill="none" stroke="#fff" stroke-width="2.600"><circle cx="11" cy="5.500" r="4"/><circle cx="5.500" cy="12" r="4"/><circle cx="16.500" cy="12" r="4"/></svg></div>
 <span class="ms-2">拖拽至此上传</span>
</div>

<form class="dlg position-absolute">
 <div class="dlg-head d-flex align-items-center">
  <svg width="15" height="15" viewBox="0 0 16 16" fill="none" stroke="#fff"><circle cx="8" cy="8" r="5" stroke-width="2"/><circle cx="8" cy="8" r="7" stroke-width="2" stroke-dasharray="2.500 3"/><circle cx="8" cy="8" r="1.500" fill="#fff" stroke="none"/></svg>
  <span class="ms-2">通过点生成样条（即将失效）</span>
  <button type="button" class="ms-auto" aria-label="关闭"><svg width="12" height="12" viewBox="0 0 12 12"><path d="M1 1l10 10M11 1L1 11" stroke="#fff" stroke-width="2"/></svg></button>
 </div>
 <div class="dlg-body">
  <fieldset class="kind"><legend>曲线类型</legend>
   <label><input type="radio" name="k" checked>多段</label>
   <label><input type="radio" name="k">单段</label>
  </fieldset>
  <div class="line-row row-deg justify-content-between"><label for="deg">曲线次数</label><span class="position-relative"><input id="deg" class="deg-in d-block" value="1"><i class="deg-cur"></i></span></div>
  <div class="line-row row-chk gap-1"><input class="chk" type="checkbox" id="cl"><label for="cl">封闭曲线</label></div>
  <div class="line-row row-btns flex-column">
   <button type="button" class="wide-btn">指派斜率</button>
   <button type="button" class="wide-btn">指派曲率</button>
   <button type="button" class="wide-btn hot">文件中的点</button>
  </div>
  <div class="row-act d-flex justify-content-end"><button type="button" class="act go">确定</button><button type="button" class="act">返回</button><button type="button" class="act">取消</button></div>
 </div>
 <div class="mark-box position-absolute pe-none"></div>
</form>
<script src="https://cdn.jsdelivr.net/npm/bootstrap@5.3.0/dist/js/bootstrap.bundle.min.js"></script>
</body>
</html>
